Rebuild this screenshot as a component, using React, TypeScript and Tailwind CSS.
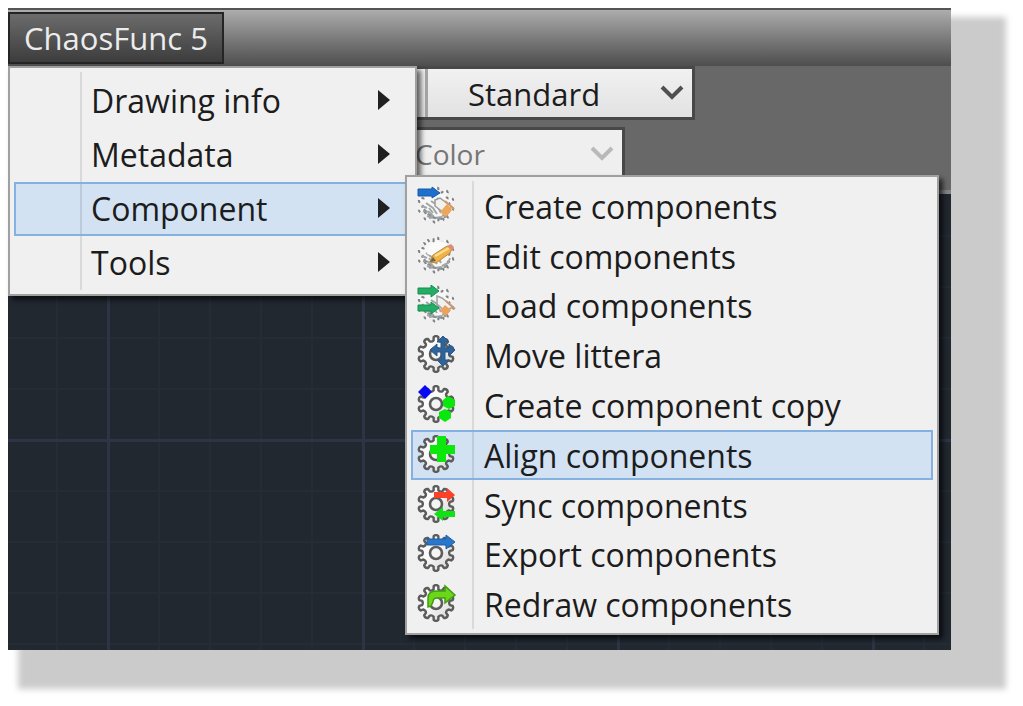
import type { ReactNode } from "react";

const FONT = "font-['Open_Sans','Noto_Sans',sans-serif]";

function gearPath(cx: number, cy: number, outer: number, inner: number, teeth: number) {
  const step = (Math.PI * 2) / teeth;
  const at = (r: number, a: number) =>
    `${(cx + r * Math.sin(a)).toFixed(2)} ${(cy - r * Math.cos(a)).toFixed(2)}`;
  let d = "";
  for (let i = 0; i < teeth; i++) {
    const a = i * step;
    d += `${i === 0 ? "M" : "L"}${at(inner, a - step * 0.27)}`;
    d += `L${at(outer - 1, a - step * 0.22)}`;
    d += `Q${at(outer + 1, a)} ${at(outer - 1, a + step * 0.22)}`;
    d += `L${at(inner, a + step * 0.27)}`;
    d += `Q${at(inner - 1.5, a + step * 0.5)} ${at(inner, a + step * 0.73)}`;
  }
  return d + "Z";
}

const GEAR = gearPath(19, 19, 18, 14, 10);

function Gear() {
  return (
    <>
      <path d={GEAR} fill="url(#gearFill)" stroke="#5c5c5c" strokeWidth="2.4" strokeLinejoin="round" />
      <circle cx="19" cy="19" r="6" fill="#f4f4f4" stroke="#5c5c5c" strokeWidth="2.6" />
    </>
  );
}

function SketchGear() {
  return (
    <>
      <path d={GEAR} fill="#f7f7f7" stroke="#808080" strokeWidth="2" strokeDasharray="3 4" />
      <path
        d="M5 20l5 2M6 25l6 1 5 5M10 30l7 2 8-1M9 17l7 5 4 6M14 15l6 4 4 8M25 30l6-3 2-5M20 12l6 4M12 22l4 5"
        fill="none"
        stroke="#a2a6a8"
        strokeWidth="2"
      />
      <path d="M7 23l4 5 7 4 7 1 6-4" fill="none" stroke="#8b9092" strokeWidth="2" strokeDasharray="4 2" />
    </>
  );
}

const ICONS: Record<string, ReactNode> = {
  create: (
    <>
      <SketchGear />
      <path d="M18 14l5-2 12 9-8 6-9-7z" fill="#f1f1ef" stroke="#9b9b9b" strokeWidth="1.5" />
      <path d="M23 26l7-8 5 6-6 7z" fill="#eda75d" />
      <path d="M28 15l9 8" stroke="#d59a61" strokeWidth="2" />
      <path d="M1 3h14V1l8 6-8 5v-2H1z" fill="#1f70cc" stroke="#155ba9" />
    </>
  ),
  edit: (
    <>
      <SketchGear />
      <path d="M14 7l12-2 6 6-14 9-8-2z" fill="#fafafa" />
      <path d="M13 26l3-7L30 10l5 3-2 4-14 10z" fill="#eeb247" stroke="#c78733" />
      <path d="M18 20l14-8" stroke="#fbdc91" strokeWidth="2.5" />
      <path d="M30 10l4-2 3 3-2 4z" fill="#df8b76" />
      <path d="M13 26l3-5 3 4z" fill="#6b6256" />
    </>
  ),
  load: (
    <>
      <SketchGear />
      <path d="M20 11l5 2 11 9-8 4-8-7z" fill="#f1f1ef" stroke="#a3a3a3" strokeWidth="1.5" />
      <path d="M23 26l5-6 6 5-5 6z" fill="#eda15e" />
      <path d="M29 16l9 8" stroke="#c99a70" strokeWidth="2" />
      <path d="M1 3h13V0l8 6-8 6V9H1zM1 20h13v-3l8 6-8 6v-3H1z" fill="#25ad66" stroke="#158f50" />
    </>
  ),
  move: (
    <>
      <Gear />
      <path
        d="M26 1l6 6h-4v6h4V9l6 6-6 6v-4h-4v8h4l-6 6-6-6h4v-8h-4v4l-7-6 7-6v4h4V7h-4z"
        fill="#2f639b"
        stroke="#285888"
      />
    </>
  ),
  copy: (
    <>
      <Gear />
      <path d="M8 0l7 7-7 7-7-7z" fill="#0808f4" />
      <path d="M31 11l7 4v6l-6 3-6-3v-6zM28 24l6 3v6l-6 4-6-4v-6z" fill="#08e80b" />
    </>
  ),
  align: (
    <>
      <Gear />
      <path d="M20 1h9v9h9v9h-9v8h-9v-8h-7v-9h7z" fill="#0ce80c" />
    </>
  ),
  sync: (
    <>
      <Gear />
      <path d="M17 7h13V3l8 7-8 7v-4H17z" fill="#fb4128" />
      <path d="M38 26H26v-4l-9 7 9 7v-4h12z" fill="#10e214" />
    </>
  ),
  exporting: (
    <>
      <Gear />
      <path d="M10 5h19V1l9 7-9 7v-4H10z" fill="#2877cb" stroke="#1e60a8" />
    </>
  ),
  redraw: (
    <>
      <Gear />
      <path
        d="M11 23v-9q0-7 8-7h9V2l10 9-10 8v-5h-8q-4 0-4 4l-2 4z"
        fill="#6bd61a"
        stroke="#419c13"
        strokeWidth="1.5"
      />
    </>
  ),
};

const MENU = ["Drawing info", "Metadata", "Component", "Tools"];

const SUBMENU = [
  { label: "Create components", icon: "create" },
  { label: "Edit components", icon: "edit" },
  { label: "Load components", icon: "load" },
  { label: "Move littera", icon: "move" },
  { label: "Create component copy", icon: "copy" },
  { label: "Align components", icon: "align" },
  { label: "Sync components", icon: "sync" },
  { label: "Export components", icon: "exporting" },
  { label: "Redraw components", icon: "redraw" },
];

const ROW_IDLE = "border-transparent";
const ROW_ACTIVE = "border-[#84b1df] bg-[#d2e2f2]";

function Chevron({ className }: { className: string }) {
  return (
    <svg viewBox="0 0 24 18" className={`pointer-events-none col-start-1 row-start-1 h-[18px] w-6 self-center justify-self-end ${className}`}>
      <path d="M2 3l10 10L22 3" fill="none" stroke="currentColor" strokeWidth="4" />
    </svg>
  );
}

export default function App() {
  return (
    <div className={`flex min-h-screen bg-white pt-[17px] pr-[17px] pb-[17px] pl-[18px] text-[31px] leading-10 text-[#1c1c1c] ${FONT}`}>
      <svg width="0" height="0" className="absolute" aria-hidden="true">
        <defs>
          <linearGradient id="gearFill" x1="0" y1="0" x2="1" y2="1">
            <stop offset="0.4" stopColor="#fbfbfb" />
            <stop offset="1" stopColor="#d2d2d2" />
          </linearGradient>
        </defs>
      </svg>

      <div className="relative flex flex-1 pr-[55px] pb-[39px]">
        <div className="absolute inset-0 bg-[#cbcbcb] blur-[3px]" />
        <div className="relative -mt-[9px] -ml-[10px] flex flex-1 flex-col">
          <header className="flex h-[58px] shrink-0 items-end border-t-2 border-[#555555] bg-linear-to-b from-[#adadad] to-[#4e4e4e] pb-[2px]">
            <button
              type="button"
              aria-expanded="true"
              className="h-[52px] w-[216px] border-2 border-[#252525] bg-linear-to-b from-[#6c6c6c] to-[#3d3d3d] text-center leading-10 whitespace-nowrap text-[#ececec]"
            >
              ChaosFunc 5
            </button>
          </header>

          <section className="flex h-32 shrink-0 flex-col items-start gap-[7px] border-b-4 border-[#858585] bg-[#686868] pl-[404px]">
            <div className="grid h-[54px] w-[283px] border-[3px] border-[#484848] bg-linear-to-b from-[#f1f1f1] to-[#e2e2e2]">
              <select
                aria-label="Style"
                className="col-start-1 row-start-1 ml-[10px] appearance-none border-l-[3px] border-[#a5a5a5] pt-[2px] pl-10 outline-none"
              >
                <option>Standard</option>
              </select>
              <Chevron className="mr-2 text-[#505050]" />
            </div>
            <div className="grid h-[54px] w-[213px] border-[3px] border-[#484848] bg-[#efefef]">
              <select
                aria-label="Color"
                disabled
                className="col-start-1 row-start-1 appearance-none text-[28px] text-[#767676] opacity-100"
              >
                <option>Color</option>
              </select>
              <Chevron className="mr-2 text-[#b9b9b9]" />
            </div>
          </section>

          <main className="flex-1 bg-[#212830] bg-[linear-gradient(90deg,#2c3445_3px,transparent_3px),linear-gradient(#2c3445_3px,transparent_3px),linear-gradient(90deg,#242c36_2px,transparent_2px),linear-gradient(#242c36_2px,transparent_2px)] bg-size-[255px_255px,255px_255px,51px_51px,51px_51px] bg-position-[99px_0,0_245px,99px_0,0_245px]" />

          <nav
            aria-label="ChaosFunc 5"
            className="absolute top-[58px] left-0 w-[409px] border-2 border-[#a0a0a0] bg-[#f0f0f0] px-1 pt-[6px] pb-1 text-[32px] shadow-[4px_4px_5px_#0009]"
          >
            <div className="absolute top-1 bottom-1 left-[70px] w-[2px] bg-[#d9d9d9]" />
            {MENU.map((label) => (
              <button
                key={label}
                type="button"
                aria-haspopup="menu"
                className={`relative flex h-[54px] w-full items-center justify-between border-2 pr-[19px] pl-[75px] text-left ${label === "Component" ? ROW_ACTIVE : ROW_IDLE}`}
              >
                {label === "Component" && <span className="absolute inset-y-0 left-[64px] w-[2px] bg-[#bccbdc]" />}
                {label}
                <svg viewBox="0 0 12 20" className="mb-[2px] h-5 w-3">
                  <path d="M0 0l12 10L0 20z" fill="#202020" />
                </svg>
              </button>
            ))}
          </nav>

          <nav
            aria-label="Component"
            className="absolute top-[167px] left-[397px] w-[534px] border-2 border-[#a0a0a0] bg-[#f0f0f0] px-1 py-1 text-[32px] shadow-[4px_4px_5px_#000a]"
          >
            <div className="absolute top-1 bottom-1 left-[65px] w-[2px] bg-[#d9d9d9]" />
            <div className="grid h-[448px] grid-rows-9">
              {SUBMENU.map(({ label, icon }) => (
                <button
                  key={label}
                  type="button"
                  className={`relative flex items-center gap-7 border-2 pt-[2px] pl-1 text-left whitespace-nowrap ${icon === "align" ? ROW_ACTIVE : ROW_IDLE}`}
                >
                  {icon === "align" && <span className="absolute inset-y-0 left-[59px] w-[2px] bg-[#bccbdc]" />}
                  <svg viewBox="0 0 39 38" className="mb-1 h-[38px] w-[39px] shrink-0">
                    {ICONS[icon]}
                  </svg>
                  {label}
                </button>
              ))}
            </div>
          </nav>
        </div>
      </div>
    </div>
  );
}
